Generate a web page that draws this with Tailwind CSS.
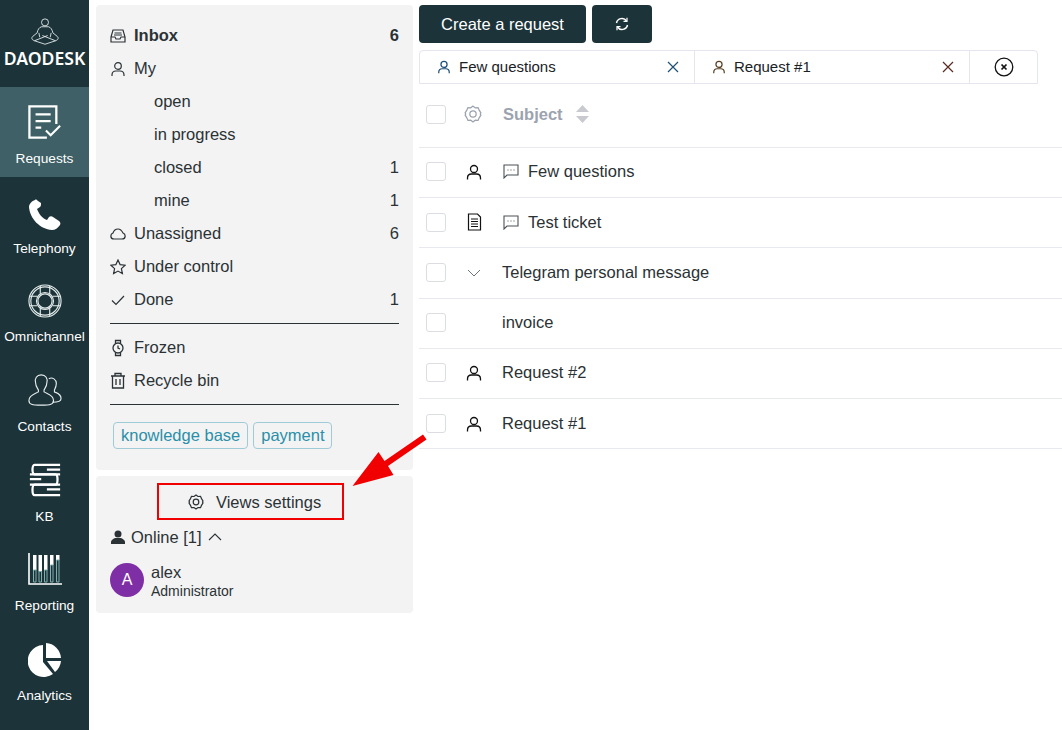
<!DOCTYPE html>
<html lang="en">
<head>
  <meta charset="UTF-8">
  <title>Daodesk</title>
  <script src="https://cdn.jsdelivr.net/npm/@tailwindcss/browser@4"></script>
</head>
<body class="relative h-[730px] w-[1062px] overflow-hidden bg-white font-['Liberation_Sans',Arial,sans-serif] text-[16.5px] text-[#2b3235]">
  <div class="flex h-full">
    <!-- Nav -->
    <nav class="flex h-full w-[89px] shrink-0 flex-col bg-[#1c3339] text-[13.7px] text-white">
      <div class="flex h-[87px] flex-col items-center pt-[18px]">
        <svg width="30" height="28" viewBox="0 0 34 32" fill="none" stroke="#e8eeee" stroke-width="1">
          <circle cx="17" cy="5" r="4"/>
          <path d="M13 10c-3 1-4 3-5 7l-5 4c-2 2-1 4 2 5l12 4 12-4c3-1 4-3 2-5l-5-4c-1-4-2-6-5-7z"/>
          <path d="M5 26l15-6M29 26l-15-6M10 17l1 5M24 17l-1 5"/>
        </svg>
        <div class="mt-[2px] font-['Noto_Sans',sans-serif] text-[17.6px] leading-[20px] font-semibold">DAODESK</div>
      </div>

      <a class="flex h-[90px] flex-col items-center bg-[#3e6066] pt-[18px]">
        <svg width="34" height="34" viewBox="0 0 36 36" fill="none" stroke="white" stroke-width="2.4">
          <path d="M30 20V1.500H1.500v33H20"/>
          <path d="M8 10h16M8 17h16M8 24h6" />
          <path d="M19 27l5 5 10-10" stroke-width="2.200"/>
        </svg>
        <span class="mt-[12px] leading-[16px]">Requests</span>
      </a>

      <a class="flex h-[90px] flex-col items-center pt-[21px]">
        <svg width="34" height="34" viewBox="0 0 34 34" fill="white">
          <path d="M7 2C4 3 1 6 1 9c1 12 11 22 23 23 3 0 6-2 8-5 1-2 0-3-1-4l-6-4c-1-1-3-1-4 0l-2 3c-5-2-8-6-10-11l3-2c1-1 1-2 1-4L10 3C9 2 8 1 7 2z"/>
        </svg>
        <span class="mt-[9px] leading-[16px]">Telephony</span>
      </a>

      <a class="flex h-[89px] flex-col items-center pt-[17px]">
        <svg width="34" height="34" viewBox="0 0 36 36" fill="none" stroke="#e4ecec" stroke-width="1.2">
          <circle cx="18" cy="18" r="17"/>
          <circle cx="18" cy="18" r="15"/>
          <circle cx="18" cy="18" r="9"/>
          <circle cx="18" cy="18" r="7.5"/>
          <path d="M13 2v9M23 2v9M13 34v-9M23 34v-9M1 13h9M1 23h9M35 13h-9M35 23h-9"/>
        </svg>
        <span class="mt-[11px] leading-[16px]">Omnichannel</span>
      </a>

      <a class="flex h-[90px] flex-col items-center pt-[17px]">
        <svg width="34" height="34" viewBox="0 0 36 36" fill="none" stroke="#e8eeee" stroke-width="1.2">
          <path d="M14 2c-5 0-7 4-6 8 0 4 2 6 3 8v2c-3 2-10 3-10 9 0 4 3 5 13 5s13-1 13-5c0-6-7-7-10-9v-2c1-2 3-4 3-8 1-4-1-8-6-8z"/>
          <path d="M22 6c4-2 8 1 8 5 0 3-1 5-2 7v2c2 1 7 2 7 7 0 3-3 4-9 4"/>
        </svg>
        <span class="mt-[12px] leading-[16px]">Contacts</span>
      </a>

      <a class="flex h-[89px] flex-col items-center pt-[17px]">
        <svg width="34" height="34" viewBox="0 0 36 36" fill="none" stroke="white" stroke-width="2.4">
          <path d="M34 2H7C4 2 4 12 7 12h27M34 7H20"/>
          <path d="M2 12h27c3 0 3 11 0 11H2M2 17h12"/>
          <path d="M34 23H7c-3 0-3 11 0 11h27M34 28H20"/>
        </svg>
        <span class="mt-[12px] leading-[16px]">KB</span>
      </a>

      <a class="flex h-[90px] flex-col items-center pt-[18px]">
        <svg width="34" height="32" viewBox="0 0 34 32" fill="none">
          <path d="M1 0v31h33" stroke="white" stroke-width="1.6"/>
          <path d="M5 2h3.500v15H5zM10.500 2H14v16.500h-3.500zM16 2h3.500v15H16zM22 2h3.500v10H22zM28 2h3.500v5H28z" fill="white"/>
          <path d="M5.500 17h2.500v12H5.500zM11 18.500h2.500V29H11zM16.500 17H19v12h-2.500zM22.500 12H25v17h-2.500zM28.500 7H31v22h-2.500z" stroke="#7fb0b0"/>
        </svg>
        <span class="mt-[13px] leading-[16px]">Reporting</span>
      </a>

      <a class="flex h-[89px] flex-col items-center pt-[18px]">
        <svg width="34" height="34" viewBox="0 0 34 34" fill="white">
          <path d="M15 2v17l10 12A16 16 0 1 1 15 2z"/>
          <path d="M18 0a16 16 0 0 1 15 15H18z"/>
          <path d="M19 18h14a16 16 0 0 1-6 11z"/>
        </svg>
        <span class="mt-[11px] leading-[16px]">Analytics</span>
      </a>
    </nav>

    <!-- Views column -->
    <aside class="ml-[7px] flex w-[317px] shrink-0 flex-col gap-[6px] pt-[5px]">
      <div class="h-[465px] rounded-[4px] bg-[#f3f3f4] px-[14px] pt-[14px]">
        <div class="flex h-[33px] items-center font-bold">
          <svg class="mr-[8px] w-[16px]" width="16" height="16" viewBox="0 0 16 16" fill="none" stroke="#2b3235" stroke-width="1.2"><path d="M1 9l2-7h10l2 7v5H1zM1 9h4l1 2h4l1-2h4M4.500 5h7M4 7h8"/></svg>
          <span>Inbox</span><span class="ml-auto">6</span>
        </div>
        <div class="flex h-[33px] items-center">
          <svg class="mr-[8px]" width="16" height="16" viewBox="0 0 16 16" fill="none" stroke="#2b3235" stroke-width="1.2"><circle cx="8" cy="5" r="3.300"/><path d="M2 15v-1c0-2 1-4 4-4h4c3 0 4 2 4 4v1"/></svg>
          <span>My</span>
        </div>
        <div class="flex h-[33px] items-center pl-[44px]">open</div>
        <div class="flex h-[33px] items-center pl-[44px]">in progress</div>
        <div class="flex h-[33px] items-center pl-[44px]"><span>closed</span><span class="ml-auto">1</span></div>
        <div class="flex h-[33px] items-center pl-[44px]"><span>mine</span><span class="ml-auto">1</span></div>
        <div class="flex h-[33px] items-center">
          <svg class="mr-[8px]" width="16" height="16" viewBox="0 0 16 16" fill="none" stroke="#2b3235" stroke-width="1.2"><path d="M4 13c-4 0-4-5-1-6 1-3 3-4 5-4 3 0 4 2 5 4 3 1 3 6-1 6z"/></svg>
          <span>Unassigned</span><span class="ml-auto">6</span>
        </div>
        <div class="flex h-[33px] items-center">
          <svg class="mr-[8px]" width="16" height="16" viewBox="0 0 16 16" fill="none" stroke="#2b3235" stroke-width="1.2"><path d="M8 1l2.100 4.600 5 .6-3.700 3.400 1 5L8 12.100 3.600 14.600l1-5L.9 6.200l5-.6z"/></svg>
          <span>Under control</span>
        </div>
        <div class="flex h-[33px] items-center">
          <svg class="mr-[8px]" width="16" height="16" viewBox="0 0 16 16" fill="none" stroke="#2b3235" stroke-width="1.2"><path d="M2 8.500l4 4 8-8.500"/></svg>
          <span>Done</span><span class="ml-auto">1</span>
        </div>
        <hr class="mt-[7px] mb-[7px] border-[#2b3235]">
        <div class="flex h-[33px] items-center">
          <svg class="mr-[8px]" width="16" height="18" viewBox="0 0 16 18" fill="none" stroke="#2b3235" stroke-width="1.3"><circle cx="8" cy="9" r="5"/><path d="M8 6.500V9l2 1M5.500 4.500V1.500h5v3M5.500 13.500v3h5v-3"/></svg>
          <span>Frozen</span>
        </div>
        <div class="flex h-[33px] items-center">
          <svg class="mr-[8px]" width="16" height="17" viewBox="0 0 16 17" fill="none" stroke="#2b3235" stroke-width="1.3"><path d="M1 4h14M5 4V1.500h6V4M2.500 4v12h11V4M6 7v6M10 7v6"/></svg>
          <span>Recycle bin</span>
        </div>
        <hr class="mt-[7px] border-[#2b3235]">
        <div class="mt-[17px] ml-[3px] flex gap-[5px] text-[#2a8fa8]">
          <span class="flex h-[27px] items-center rounded-[4px] border border-[#9fcbd6] px-[7px]">knowledge base</span>
          <span class="flex h-[27px] items-center rounded-[4px] border border-[#9fcbd6] pr-[6px] pl-[7px]">payment</span>
        </div>
      </div>

      <div class="h-[137px] rounded-[4px] bg-[#f3f3f4] pt-[7px]">
        <div class="ml-[61px] flex h-[37px] w-[187px] items-center border-2 border-[#f00000] pt-[1px] pl-[29px] text-[#2b3235]">
          <svg class="mr-[12px]" width="16" height="16" viewBox="0 0 16 16" fill="none" stroke="#2b3235" stroke-width="1.200"><path d="M8 1l2 1.500 2.500-.2 1 2.300L15 7l-.5 1 .5 1-1.500 2.400-1 2.300-2.500-.2L8 15l-2-1.500-2.500.2-1-2.300L1 9l.5-1L1 7l1.500-2.400 1-2.300L6 2.500z"/><circle cx="8" cy="8" r="2.800"/></svg>
          <span>Views settings</span>
        </div>
        <div class="mt-[6px] flex h-[22px] items-center pl-[15px]">
          <svg class="mr-[6px]" width="14" height="14" viewBox="0 0 14 14" fill="#2b3235"><circle cx="7" cy="4" r="3.500"/><path d="M0 14v-2c0-2 2-3 4-4h6c2 1 4 2 4 4v2z"/></svg>
          <span>Online [1]</span>
          <svg class="ml-[6px]" width="14" height="8" viewBox="0 0 14 8" fill="none" stroke="#2b3235" stroke-width="1.100"><path d="M1 7l6-6 6 6"/></svg>
        </div>
        <div class="mt-[13px] flex items-center pl-[14px]">
          <div class="flex h-[34px] w-[34px] items-center justify-center rounded-full bg-[#7f2fa5] text-base text-white">A</div>
          <div class="ml-[7px] pt-[1px]">
            <div class="leading-[20px]">alex</div>
            <div class="mt-[1px] text-sm leading-[16px]">Administrator</div>
          </div>
        </div>
      </div>
    </aside>

    <!-- Main -->
    <main class="ml-[6px] min-w-0 flex-1 pt-[5px]">
      <div class="flex gap-[6px]">
        <button class="h-[38px] w-[167px] rounded-[4px] bg-[#1c3339] pt-[1px] text-[16.5px] text-white">Create a request</button>
        <button class="flex h-[38px] w-[60px] items-center justify-center rounded-[4px] bg-[#1c3339]">
          <svg width="14" height="14" viewBox="0 0 14 14" fill="none" stroke="white" stroke-width="1.500"><path d="M1.500 6a5.500 5.500 0 0 1 10-2M12.500 8a5.500 5.500 0 0 1-10 2"/><path d="M12 .8v3.500H8.500M2 13.200V9.700h3.500" stroke-width="1.200"/></svg>
        </button>
      </div>

      <div class="mt-[7px] flex h-[34px] w-[619px] rounded-t-[4px] border border-[#e4e5ee] text-[#1a2226]">
        <div class="flex w-[275px] items-center border-r border-[#e4e5ee] pr-[15px] pl-[17px]">
          <svg class="mr-[8px]" width="14" height="14" viewBox="0 0 16 16" fill="none" stroke="#1d4f78" stroke-width="1.400"><circle cx="8" cy="5" r="3.500"/><path d="M2 15v-1c0-2 1-4 4-4h4c3 0 4 2 4 4v1"/></svg>
          <span class="text-[15px]">Few questions</span>
          <svg class="ml-auto" width="12" height="12" viewBox="0 0 12 12" stroke="#1d4f78" stroke-width="1.200"><path d="M1 1l10 10M11 1L1 11"/></svg>
        </div>
        <div class="flex w-[275px] items-center border-r border-[#e4e5ee] pr-[15px] pl-[17px]">
          <svg class="mr-[8px]" width="14" height="14" viewBox="0 0 16 16" fill="none" stroke="#5a4025" stroke-width="1.400"><circle cx="8" cy="5" r="3.500"/><path d="M2 15v-1c0-2 1-4 4-4h4c3 0 4 2 4 4v1"/></svg>
          <span class="text-[15px]">Request #1</span>
          <svg class="ml-auto" width="12" height="12" viewBox="0 0 12 12" stroke="#5a2a20" stroke-width="1.200"><path d="M1 1l10 10M11 1L1 11"/></svg>
        </div>
        <div class="flex flex-1 items-center justify-center">
          <svg width="20" height="20" viewBox="0 0 20 20" fill="none" stroke="#111" stroke-width="1.300"><circle cx="10" cy="10" r="8.800"/><path d="M7.500 7.500l5 5M12.500 7.500l-5 5" stroke-width="1.700"/></svg>
        </div>
      </div>

      <!-- Table header -->
      <div class="flex h-[64px] items-center border-b border-[#e8e9f0] pb-[3px]">
        <span class="ml-[7px] h-[19px] w-[20px] rounded-[3px] border border-[#dcdde3]"></span>
        <svg class="ml-[18px]" width="18" height="18" viewBox="0 0 16 16" fill="none" stroke="#9ca3af" stroke-width="1.100"><path d="M8 1l2 1.500 2.500-.2 1 2.300L15 7l-.5 1 .5 1-1.500 2.400-1 2.300-2.500-.2L8 15l-2-1.500-2.500.2-1-2.300L1 9l.5-1L1 7l1.500-2.400 1-2.300L6 2.500z"/><circle cx="8" cy="8" r="2.800"/></svg>
        <span class="ml-[21px] font-bold text-[#9ca3af]">Subject</span>
        <svg class="ml-[13px]" width="13" height="20" viewBox="0 0 13 20" fill="#c8cad0"><path d="M6.500 1L13 8H0zM6.500 19L0 12h13z"/></svg>
      </div>

      <!-- Rows -->
      <div class="flex h-[50px] items-center border-b border-[#e8e9f0] pb-[2px]">
        <span class="ml-[7px] h-[19px] w-[20px] rounded-[3px] border border-[#dcdde3]"></span>
        <span class="ml-[20px] flex w-[16px] justify-center"><svg width="16" height="16" viewBox="0 0 16 16" fill="none" stroke="#111" stroke-width="1.300"><circle cx="8" cy="5" r="3.500"/><path d="M1.500 15.500V14c0-2 1-4 4-4h5c3 0 4 2 4 4v1.500"/></svg></span>
        <svg class="ml-[21px]" width="16" height="15" viewBox="0 0 16 15" fill="none" stroke="#4a5257" stroke-width="1.100"><path d="M1 1h14v10H4l-3 3z"/><path d="M4.500 6h1M7.500 6h1M10.500 6h1"/></svg>
        <span class="ml-[9px]">Few questions</span>
      </div>
      <div class="flex h-[50px] items-center border-b border-[#e8e9f0] pb-[1px]">
        <span class="ml-[7px] h-[19px] w-[20px] rounded-[3px] border border-[#dcdde3]"></span>
        <span class="ml-[20px] flex w-[16px] justify-center"><svg width="15" height="18" viewBox="0 0 14 18" fill="none" stroke="#111" stroke-width="1.200"><path d="M1 1h9l3 3v13H1z"/><path d="M3.500 6h7M3.500 8.500h7M3.500 11h7M3.500 13.500h7" stroke-width="1"/></svg></span>
        <svg class="ml-[21px]" width="16" height="15" viewBox="0 0 16 15" fill="none" stroke="#4a5257" stroke-width="1.100"><path d="M1 1h14v10H4l-3 3z"/><path d="M4.500 6h1M7.500 6h1M10.500 6h1"/></svg>
        <span class="ml-[9px]">Test ticket</span>
      </div>
      <div class="flex h-[51px] items-center border-b border-[#e8e9f0] pb-[1px]">
        <span class="ml-[7px] h-[19px] w-[20px] rounded-[3px] border border-[#dcdde3]"></span>
        <span class="ml-[20px] flex w-[16px] justify-center"><svg width="14" height="8" viewBox="0 0 14 8" fill="none" stroke="#6b7280" stroke-width="1"><path d="M1 1l6 6 6-6"/></svg></span>
        <span class="ml-[20px]">Telegram personal message</span>
      </div>
      <div class="flex h-[50px] items-center border-b border-[#e8e9f0] pb-[2px]">
        <span class="ml-[7px] h-[19px] w-[20px] rounded-[3px] border border-[#dcdde3]"></span>
        <span class="ml-[56px]">invoice</span>
      </div>
      <div class="flex h-[50px] items-center border-b border-[#e8e9f0] pb-[2px]">
        <span class="ml-[7px] h-[19px] w-[20px] rounded-[3px] border border-[#dcdde3]"></span>
        <span class="ml-[20px] flex w-[16px] justify-center"><svg width="16" height="16" viewBox="0 0 16 16" fill="none" stroke="#111" stroke-width="1.300"><circle cx="8" cy="5" r="3.500"/><path d="M1.500 15.500V14c0-2 1-4 4-4h5c3 0 4 2 4 4v1.500"/></svg></span>
        <span class="ml-[20px]">Request #2</span>
      </div>
      <div class="flex h-[50px] items-center border-b border-[#e8e9f0]">
        <span class="ml-[7px] h-[19px] w-[20px] rounded-[3px] border border-[#dcdde3]"></span>
        <span class="ml-[20px] flex w-[16px] justify-center"><svg width="16" height="16" viewBox="0 0 16 16" fill="none" stroke="#111" stroke-width="1.300"><circle cx="8" cy="5" r="3.500"/><path d="M1.500 15.500V14c0-2 1-4 4-4h5c3 0 4 2 4 4v1.500"/></svg></span>
        <span class="ml-[20px]">Request #1</span>
      </div>
    </main>
  </div>

  <!-- Annotation arrow -->
  <svg class="absolute top-[430px] left-[345px]" width="90" height="62" viewBox="345 430 90 62" fill="#f00000">
    <path d="M352.500 486L378.500 452 384.500 461 423 434.500 426.500 439.500 388 466 393.500 475z"/>
  </svg>
</body>
</html>
